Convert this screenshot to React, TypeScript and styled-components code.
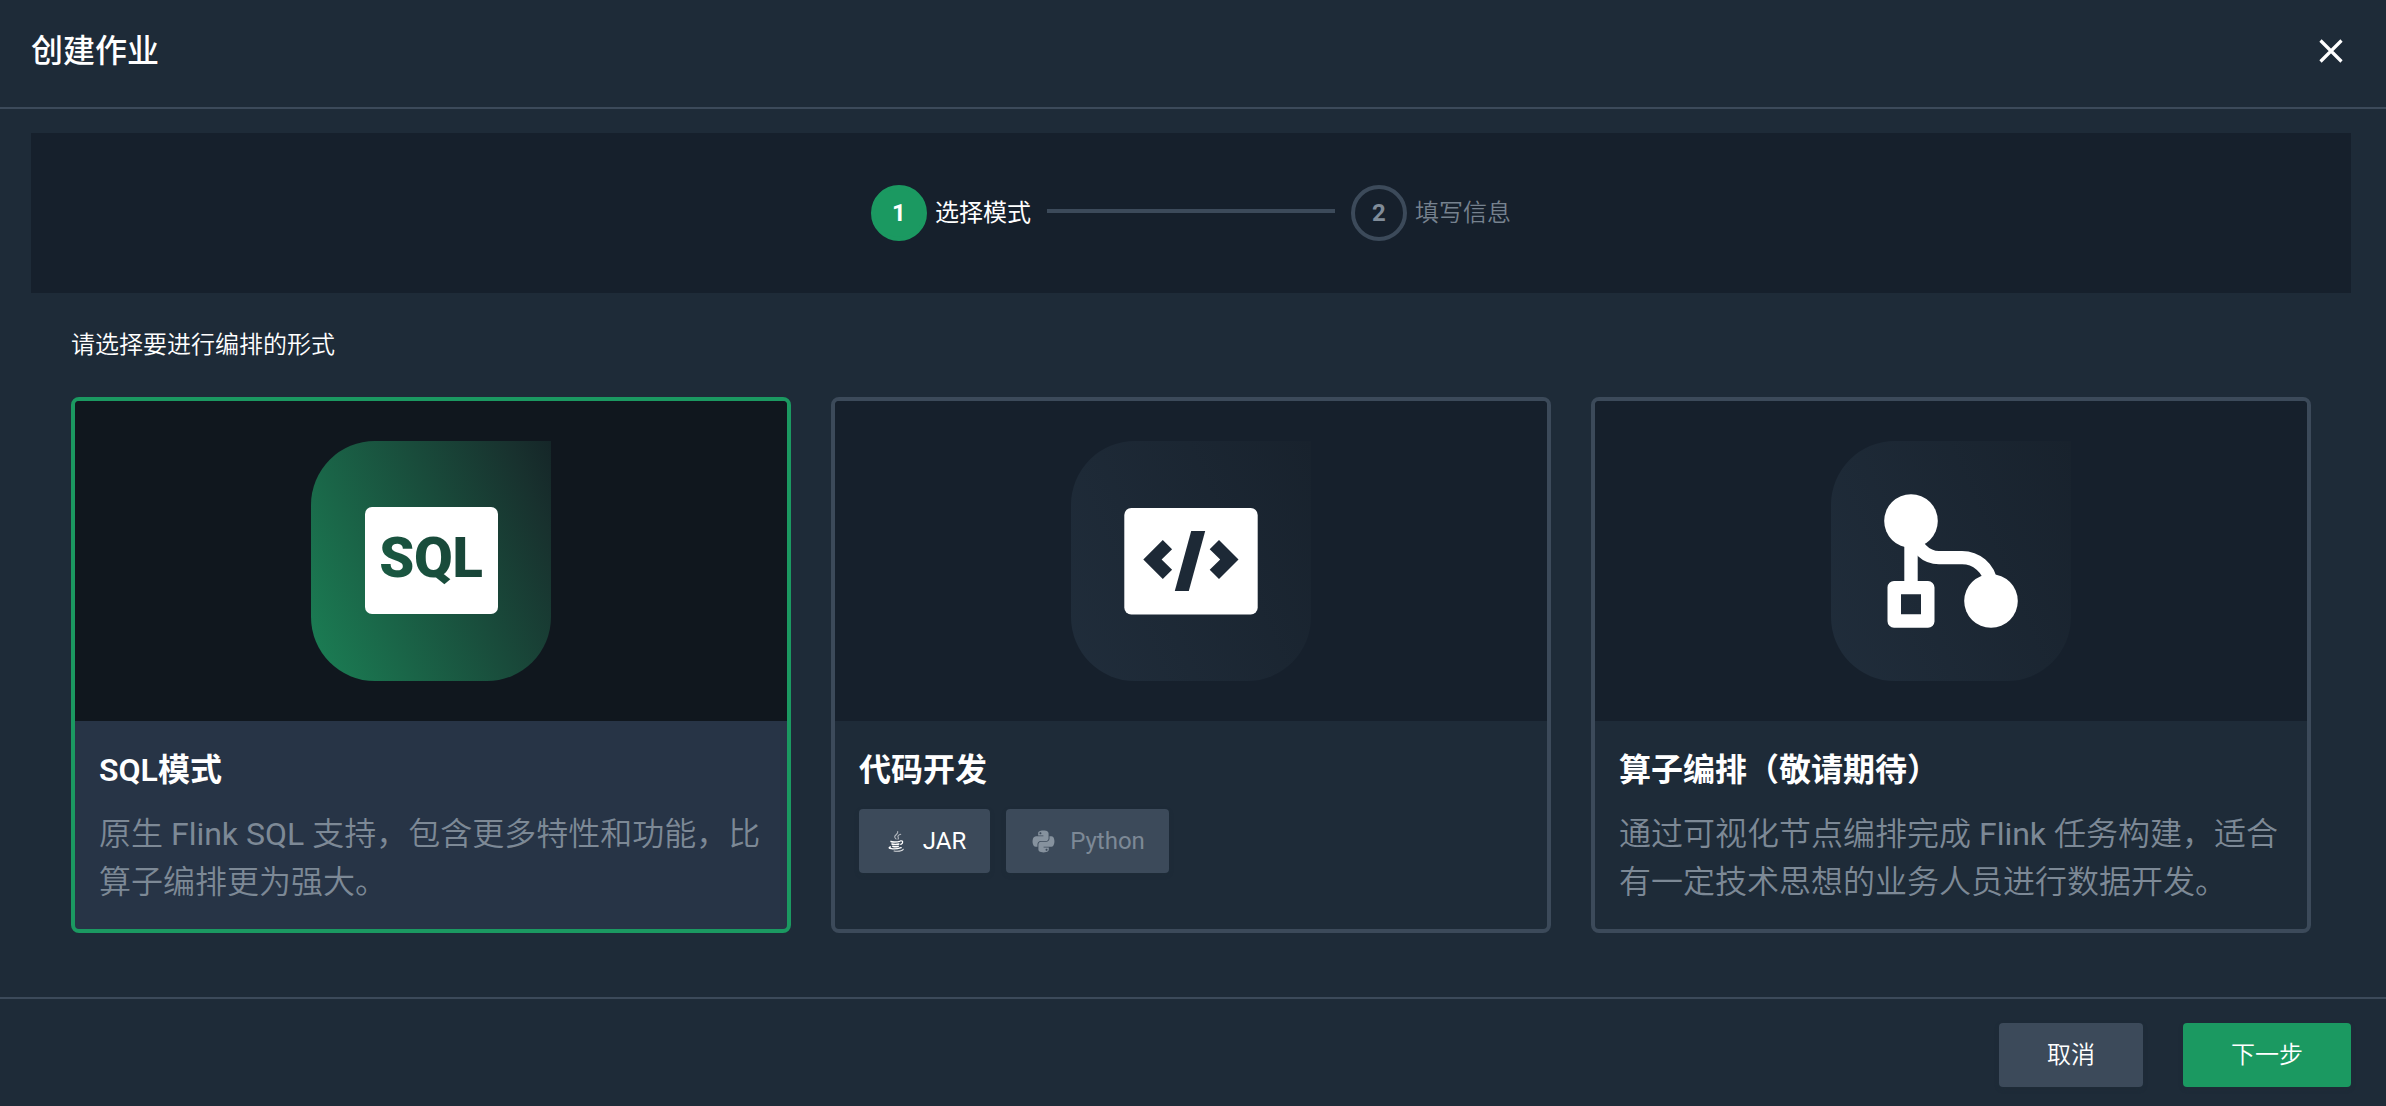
import React from 'react';
import styled, { createGlobalStyle, css } from 'styled-components';
import { FaPython } from 'react-icons/fa';

const Global = createGlobalStyle`
  * { box-sizing: border-box; }
  html, body { margin: 0; padding: 0; }
  body {
    background: #1e2b38;
    color: #fff;
    font-family: Roboto, "Noto Sans CJK SC DemiLight", "Noto Sans CJK SC", sans-serif;
    -webkit-font-smoothing: antialiased;
  }
  button { font: inherit; }
`;

const strongFont = css`
  font-family: Roboto, "Noto Sans CJK SC", sans-serif;
`;

const Modal = styled.div`
  display: flex;
  flex-direction: column;
  width: 2386px;
  height: 1106px;
  background: #1e2b38;
  overflow: hidden;
`;

const Header = styled.header`
  display: flex;
  justify-content: space-between;
  align-items: flex-start;
  height: 109px;
  padding: 27px 39px 0 31px;
  border-bottom: 2px solid #3c4a5a;
`;

const Title = styled.h1`
  ${strongFont}
  margin: 0;
  font-size: 32px;
  line-height: 48px;
  font-weight: 500;
`;

const CloseButton = styled.button`
  display: flex;
  margin: 8px 0 0;
  padding: 0;
  border: 0;
  background: none;
  color: #fff;
`;

const Body = styled.main`
  flex: 1;
  padding: 24px 35px 0 31px;
`;

const Stepper = styled.div`
  display: flex;
  align-items: center;
  justify-content: center;
  gap: 16px;
  height: 160px;
  background: #16202c;
`;

const Step = styled.div<{ $active?: boolean }>`
  display: flex;
  align-items: center;
  gap: 8px;
  font-size: 24px;
  line-height: 36px;
  color: ${(p) => (p.$active ? '#fff' : '#76828f')};
  ${(p) => p.$active && strongFont}
`;

const StepNumber = styled.span<{ $active?: boolean }>`
  display: flex;
  align-items: center;
  justify-content: center;
  width: 56px;
  height: 56px;
  border-radius: 50%;
  border: 4px solid ${(p) => (p.$active ? '#1b9961' : '#3c4a5a')};
  background: ${(p) => (p.$active ? '#1b9961' : 'transparent')};
  color: ${(p) => (p.$active ? '#fff' : '#808c99')};
  font-weight: 700;
`;

const StepLine = styled.span`
  width: 288px;
  height: 4px;
  margin-bottom: 4px;
  background: #3c4a5a;
`;

const Content = styled.section`
  padding: 34px 40px 0;
`;

const Prompt = styled.p`
  margin: 0 0 34px;
  font-size: 24px;
  line-height: 36px;
`;

const Cards = styled.div`
  display: grid;
  grid-template-columns: repeat(3, 720px);
  gap: 40px;
`;

const Card = styled.article<{ $active?: boolean }>`
  height: 536px;
  border: 4px solid ${(p) => (p.$active ? '#1b9961' : '#3c4a5a')};
  border-radius: 8px;
  overflow: hidden;
  background: ${(p) => (p.$active ? '#273446' : '#1e2b38')};
`;

const Cover = styled.div<{ $active?: boolean }>`
  display: flex;
  align-items: center;
  justify-content: center;
  height: 320px;
  background: ${(p) => (p.$active ? '#10171e' : '#16202c')};
`;

const Leaf = styled.div<{ $active?: boolean }>`
  display: flex;
  align-items: center;
  justify-content: center;
  width: 240px;
  height: 240px;
  border-radius: 64px 0 64px 64px;
  ${(p) =>
    p.$active
      ? css`background: linear-gradient(67deg, #1b8055 0%, #18312e 88%, #152628 100%);`
      : css`background: linear-gradient(67deg, #202d3b 0%, #18222d 100%);`}
`;

const Glyph = styled.svg`
  display: block;
  width: 144px;
  height: 144px;
`;

const SqlPlate = styled.div`
  display: flex;
  align-items: center;
  justify-content: center;
  width: 133px;
  height: 107px;
  margin: 0 0 1px 1px;
  padding: 0 1px 5px 0;
  border-radius: 7px;
  background: #fff;
`;

const SqlText = styled.span`
  background: linear-gradient(67deg, #1a5c43, #183f35);
  background-clip: text;
  color: transparent;
  font-size: 56px;
  line-height: 72px;
  font-weight: 900;
  letter-spacing: -0.2px;
`;

const Info = styled.div`
  padding: 25px 24px 0;
`;

const CardTitle = styled.h2`
  ${strongFont}
  margin: 0;
  font-size: 32px;
  line-height: 48px;
  font-weight: 600;
`;

const Description = styled.p`
  margin: 16px 0 0;
  font-size: 32px;
  line-height: 48px;
  color: #7d8996;
`;

const Languages = styled.div`
  display: flex;
  gap: 16px;
  margin-top: 15px;
`;

const Button = styled.button<{ $width: number; $primary?: boolean; $muted?: boolean }>`
  display: flex;
  align-items: center;
  justify-content: center;
  gap: 16px;
  width: ${(p) => p.$width}px;
  height: 64px;
  padding: 0;
  border: 0;
  border-radius: 4px;
  background: ${(p) => (p.$primary ? '#1b9961' : '#3c4a5a')};
  box-shadow: 0 2px 4px rgba(31, 45, 55, 0.4);
  color: ${(p) => (p.$muted ? '#7d8996' : '#fff')};
  font-size: 24px;
  line-height: 36px;
`;

const IconSlot = styled.span<{ $muted?: boolean }>`
  display: flex;
  align-items: center;
  justify-content: center;
  width: 24px;
  height: 24px;
  padding-left: ${(p) => (p.$muted ? 2 : 3)}px;
  color: ${(p) => (p.$muted ? '#86929e' : '#fff')};

  svg { flex: none; }
`;

const Footer = styled.footer`
  display: flex;
  justify-content: flex-end;
  gap: 40px;
  height: 109px;
  padding: 24px 35px 0;
  border-top: 2px solid #3c4a5a;
`;

const CloseIcon = () => (
  <svg width="32" height="32" viewBox="0 0 32 32">
    <path d="M5.5 5.5 26.5 26.5M26.5 5.5 5.5 26.5" stroke="currentColor" strokeWidth="3.2" />
  </svg>
);

const JavaIcon = () => (
  <svg width="16" height="21" viewBox="0 0 16 21" fill="none" stroke="currentColor" strokeLinecap="round">
    <g strokeWidth="1.1" opacity="0.6">
      <path d="M9.7.6c.8 2.600-3.400 3.400-3 5.400.1.800.8 1.200 1.400 2" />
      <path d="M12.7 3.3C10 4.200 9.400 5.200 10.200 6.400c.5.700.3 1.200-.2 1.800" />
    </g>
    <path d="M3 10.3c-.6.900 6.500.9 8.600.1" strokeWidth="1.4" />
    <path d="M12.6 9.9c2.600-.4 2.900 2.300.2 3.500" strokeWidth="1.2" />
    <path d="M3.9 13c2 .6 4.900.6 7 0M4.700 15.300c1.800.6 4 .6 5.600 0" strokeWidth="1.4" />
    <path d="M2.6 15.9c-5 1.300 3.500 3.100 10.600.7" strokeWidth="1.3" />
    <path d="M6 20c4 .4 8-.1 9.200-1.700" strokeWidth="1.1" opacity="0.8" />
  </svg>
);

const CodeGlyph = () => (
  <Glyph viewBox="0 0 144 144">
    <rect x="5.3" y="18.9" width="133.4" height="106.7" rx="7" fill="#fff" />
    <g fill="#1d2936">
      <path d="M24.3 70.5 43.8 51l9.3 9.3-10.5 10.2 10.5 10.3-9.3 9.2z" />
      <path d="M72.2 42h14l-16.4 60H55.8z" />
      <path d="M119.5 70.5 100 51l-9.3 9.3 10.5 10.2-10.5 10.3L100 90z" />
    </g>
  </Glyph>
);

const FlowGlyph = () => (
  <Glyph viewBox="0 0 144 144">
    <g fill="none" stroke="#fff">
      <path d="M32 50v50" strokeWidth="13.4" />
      <path d="M31.8 42C37 58 46 68.6 60 68.6h23c14 0 27 10 29 26" strokeWidth="13.4" />
    </g>
    <path
      fill="#fff"
      fillRule="evenodd"
      d="M15 92h34a6.500 6.500 0 0 1 6.500 6.500v34A6.500 6.500 0 0 1 49 138.700H15a6.500 6.500 0 0 1-6.500-6.500v-34A6.500 6.500 0 0 1 15 92zm7 13.200v20h20v-20z"
    />
    <circle cx="32" cy="32" r="26.8" fill="#fff" />
    <circle cx="112" cy="112" r="26.8" fill="#fff" />
  </Glyph>
);

export default function App() {
  return (
    <>
      <Global />
      <Modal>
        <Header>
          <Title>创建作业</Title>
          <CloseButton aria-label="关闭"><CloseIcon /></CloseButton>
        </Header>
        <Body>
          <Stepper>
            <Step $active><StepNumber $active>1</StepNumber>选择模式</Step>
            <StepLine />
            <Step><StepNumber>2</StepNumber>填写信息</Step>
          </Stepper>
          <Content>
            <Prompt>请选择要进行编排的形式</Prompt>
            <Cards>
              <Card $active>
                <Cover $active>
                  <Leaf $active><SqlPlate><SqlText>SQL</SqlText></SqlPlate></Leaf>
                </Cover>
                <Info>
                  <CardTitle>SQL模式</CardTitle>
                  <Description>原生 Flink SQL 支持，包含更多特性和功能，比算子编排更为强大。</Description>
                </Info>
              </Card>
              <Card>
                <Cover><Leaf><CodeGlyph /></Leaf></Cover>
                <Info>
                  <CardTitle>代码开发</CardTitle>
                  <Languages>
                    <Button $width={131}><IconSlot><JavaIcon /></IconSlot>JAR</Button>
                    <Button $width={163} $muted><IconSlot $muted><FaPython size={25} /></IconSlot>Python</Button>
                  </Languages>
                </Info>
              </Card>
              <Card>
                <Cover><Leaf><FlowGlyph /></Leaf></Cover>
                <Info>
                  <CardTitle>算子编排（敬请期待）</CardTitle>
                  <Description>通过可视化节点编排完成 Flink 任务构建，适合有一定技术思想的业务人员进行数据开发。</Description>
                </Info>
              </Card>
            </Cards>
          </Content>
        </Body>
        <Footer>
          <Button $width={144}>取消</Button>
          <Button $width={168} $primary>下一步</Button>
        </Footer>
      </Modal>
    </>
  );
}
